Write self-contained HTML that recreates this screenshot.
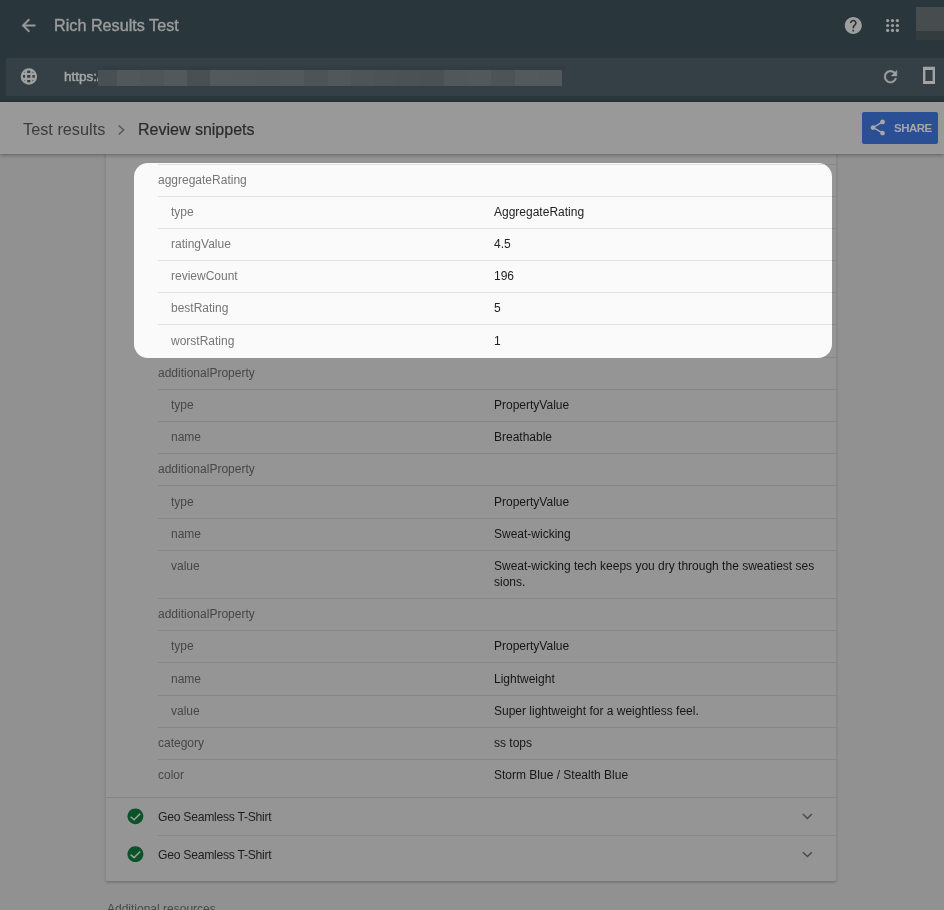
<!DOCTYPE html>
<html><head><meta charset="utf-8">
<style>
*{box-sizing:border-box;margin:0;padding:0}
html,body{width:944px;height:910px;overflow:hidden}
body{position:relative;background:#919191;font-family:"Liberation Sans",sans-serif;}
.a{position:absolute}
.t{position:absolute;white-space:nowrap;line-height:16px;will-change:transform}
#hdr{left:0;top:0;width:944px;height:102px;background:#29363c}
#url{left:6px;top:58px;width:938px;height:38px;background:#344045}
#crumb{left:0;top:102px;width:944px;height:52px;background:#999999;box-shadow:0 1px 4px rgba(0,0,0,.35)}
#card{left:105px;top:140px;width:732px;height:741px;background:#959595;border-left:1px solid #888888;border-right:1px solid #888888;border-radius:0 0 2px 2px;box-shadow:0 2px 3px -1px rgba(0,0,0,.3)}
.ln{position:absolute;height:1px;background:#878787}
.lbl{font-size:12px;color:#474747}
.val{font-size:12px;color:#161616}
#hl{left:134px;top:163px;width:698px;height:195px;background:#fafafa;border-radius:14px;overflow:hidden}
#hl .ln{background:#e2e2e2}
#hl .lbl{color:#767676}
#hl .val{color:#222222}
</style></head><body>
<div id="card" class="a"></div>
<div class="ln" style="left:158px;top:164px;width:678px"></div>
<div class="ln" style="left:158px;top:196px;width:678px"></div>
<div class="ln" style="left:158px;top:228px;width:678px"></div>
<div class="ln" style="left:158px;top:260px;width:678px"></div>
<div class="ln" style="left:158px;top:292px;width:678px"></div>
<div class="ln" style="left:158px;top:324px;width:678px"></div>
<div class="ln" style="left:158px;top:357px;width:678px"></div>
<div class="ln" style="left:158px;top:389px;width:678px"></div>
<div class="ln" style="left:158px;top:421px;width:678px"></div>
<div class="ln" style="left:158px;top:453px;width:678px"></div>
<div class="ln" style="left:158px;top:485px;width:678px"></div>
<div class="ln" style="left:158px;top:518px;width:678px"></div>
<div class="ln" style="left:158px;top:550px;width:678px"></div>
<div class="ln" style="left:158px;top:598px;width:678px"></div>
<div class="ln" style="left:158px;top:630px;width:678px"></div>
<div class="ln" style="left:158px;top:662px;width:678px"></div>
<div class="ln" style="left:158px;top:695px;width:678px"></div>
<div class="ln" style="left:158px;top:727px;width:678px"></div>
<div class="ln" style="left:158px;top:759px;width:678px"></div>
<div class="t lbl" style="left:158px;top:364.64px">additionalProperty</div>
<div class="t lbl" style="left:171px;top:396.64px">type</div>
<div class="t val" style="left:494px;top:396.64px">PropertyValue</div>
<div class="t lbl" style="left:171px;top:428.64px">name</div>
<div class="t val" style="left:494px;top:428.64px">Breathable</div>
<div class="t lbl" style="left:158px;top:460.64px">additionalProperty</div>
<div class="t lbl" style="left:171px;top:493.64px">type</div>
<div class="t val" style="left:494px;top:493.64px">PropertyValue</div>
<div class="t lbl" style="left:171px;top:525.64px">name</div>
<div class="t val" style="left:494px;top:525.64px">Sweat-wicking</div>
<div class="t lbl" style="left:171px;top:557.64px">value</div>
<div class="t val" style="left:494px;top:557.64px">Sweat-wicking tech keeps you dry through the sweatiest ses<br>sions.</div>
<div class="t lbl" style="left:158px;top:605.64px">additionalProperty</div>
<div class="t lbl" style="left:171px;top:637.64px">type</div>
<div class="t val" style="left:494px;top:637.64px">PropertyValue</div>
<div class="t lbl" style="left:171px;top:670.64px">name</div>
<div class="t val" style="left:494px;top:670.64px">Lightweight</div>
<div class="t lbl" style="left:171px;top:702.64px">value</div>
<div class="t val" style="left:494px;top:702.64px">Super lightweight for a weightless feel.</div>
<div class="t lbl" style="left:158px;top:734.64px">category</div>
<div class="t val" style="left:494px;top:734.64px">ss tops</div>
<div class="t lbl" style="left:158px;top:766.64px">color</div>
<div class="t val" style="left:494px;top:766.64px">Storm Blue / Stealth Blue</div>
<div class="ln" style="left:106px;top:797px;width:731px"></div>
<div class="ln" style="left:158px;top:835px;width:678px"></div>
<div class="t val" style="left:158px;top:808.64px;font-size:12.2px;letter-spacing:-0.28px;color:#1e1e1e">Geo Seamless T-Shirt</div>
<div class="t val" style="left:158px;top:847.34px;font-size:12.2px;letter-spacing:-0.28px;color:#1e1e1e">Geo Seamless T-Shirt</div>
<div class="t" style="left:107px;top:901px;font-size:12px;color:#474747">Additional resources</div>
<div id="hl" class="a">
<div class="ln" style="left:24px;top:1px;width:678px"></div>
<div class="ln" style="left:24px;top:33px;width:678px"></div>
<div class="ln" style="left:24px;top:65px;width:678px"></div>
<div class="ln" style="left:24px;top:97px;width:678px"></div>
<div class="ln" style="left:24px;top:129px;width:678px"></div>
<div class="ln" style="left:24px;top:161px;width:678px"></div>
<div class="t lbl" style="left:24px;top:8.64px">aggregateRating</div>
<div class="t lbl" style="left:37px;top:40.64px">type</div>
<div class="t val" style="left:360px;top:40.64px">AggregateRating</div>
<div class="t lbl" style="left:37px;top:72.64px">ratingValue</div>
<div class="t val" style="left:360px;top:72.64px">4.5</div>
<div class="t lbl" style="left:37px;top:104.64px">reviewCount</div>
<div class="t val" style="left:360px;top:104.64px">196</div>
<div class="t lbl" style="left:37px;top:136.64px">bestRating</div>
<div class="t val" style="left:360px;top:136.64px">5</div>
<div class="t lbl" style="left:37px;top:169.64px">worstRating</div>
<div class="t val" style="left:360px;top:169.64px">1</div>
</div>

<div id="hdr" class="a"></div>
<div class="t" style="left:54px;top:16px;font-size:16.2px;color:#9c9c9c;line-height:18px;-webkit-text-stroke:0.4px #9c9c9c">Rich Results Test</div>
<div class="a" style="left:916px;top:7px;width:28px;height:23.5px;background:#474c4e"></div>
<div class="a" style="left:916px;top:30.5px;width:28px;height:9.5px;background:#343c3e"></div>
<div id="url" class="a"></div>
<div class="t" style="left:64px;top:68.7px;font-size:13.5px;color:#a6a6a6;-webkit-text-stroke:0.5px #a6a6a6">https:/</div>
<div class="a" style="left:98px;top:66px;width:468px;height:4px;background:#323c41"></div>
<div class="a" style="left:98px;top:70px;width:464px;height:16px;background:linear-gradient(90deg,#485053 0.0px,#485053 18.6px,#50585b 18.6px,#50585b 42.0px,#4f5659 42.0px,#4f5659 65.6px,#52595c 65.6px,#52595c 89.0px,#485053 89.0px,#485053 112.5px,#525a5d 112.5px,#525a5d 135.0px,#51595c 135.0px,#51595c 159.0px,#50585b 159.0px,#50585b 183.0px,#51595c 183.0px,#51595c 206.0px,#4c5457 206.0px,#4c5457 230.0px,#50585b 230.0px,#50585b 253.0px,#4d5558 253.0px,#4d5558 276.0px,#4b5356 276.0px,#4b5356 299.0px,#4a5255 299.0px,#4a5255 323.0px,#495154 323.0px,#495154 346.0px,#50585b 346.0px,#50585b 370.0px,#51595c 370.0px,#51595c 393.0px,#4c5457 393.0px,#4c5457 417.0px,#525a5d 417.0px,#525a5d 440.0px,#51595c 440.0px,#51595c 464.0px)"></div>

<div id="crumb" class="a"></div>
<div class="t" style="left:23px;top:120px;font-size:16.3px;color:#3c3c3c;line-height:18px">Test results</div>
<div class="t" style="left:137.5px;top:121px;font-size:16px;color:#2b2b2b;line-height:18px;-webkit-text-stroke:0.2px #2b2b2b">Review snippets</div>
<div class="a" style="left:862px;top:112px;width:76px;height:32px;background:#2a4f94;border-radius:2px"></div>
<div class="t" style="left:894.3px;top:120px;font-size:11.5px;color:#a6a6a6;font-weight:bold;letter-spacing:-0.5px">SHARE</div>
<svg class="a" style="left:0;top:0" width="944" height="910" viewBox="0 0 944 910">
<defs><clipPath id="gc"><circle cx="28.9" cy="76.5" r="7.5"/></clipPath></defs>
<g transform="translate(18.600 15.500) scale(0.8333)"><path fill="#9a9a9a" stroke="#9a9a9a" stroke-width="0.5" d="M20 11H7.83l5.59-5.59L12 4l-8 8 8 8 1.41-1.41L7.83 13H20v-2z"/></g>
<g transform="translate(843.100 15.400) scale(0.8500)"><path fill="#9e9e9e" d="M12 2C6.48 2 2 6.48 2 12s4.48 10 10 10 10-4.48 10-10S17.52 2 12 2zm1 17h-2v-2h2v2zm2.07-7.75l-.9.92C13.45 12.9 13 13.5 13 15h-2v-.5c0-1.1.45-2.1 1.17-2.83l1.24-1.26c.37-.36.59-.86.59-1.41 0-1.1-.9-2-2-2s-2 .9-2 2H8c0-2.21 1.79-4 4-4s4 1.79 4 4c0 .88-.36 1.68-.93 2.25z"/></g>
<g fill="#9e9e9e"><circle cx="887.65" cy="20.6" r="1.6"/><circle cx="892.5" cy="20.6" r="1.6"/><circle cx="897.4" cy="20.6" r="1.6"/><circle cx="887.65" cy="25.5" r="1.6"/><circle cx="892.5" cy="25.5" r="1.6"/><circle cx="897.4" cy="25.5" r="1.6"/><circle cx="887.65" cy="30.4" r="1.6"/><circle cx="892.5" cy="30.4" r="1.6"/><circle cx="897.4" cy="30.4" r="1.6"/></g>
<circle cx="28.9" cy="76.5" r="7.1" fill="none" stroke="#a0a0a0" stroke-width="2.2"/>
<g clip-path="url(#gc)" stroke="#a0a0a0" stroke-width="2.1">
<line x1="26.1" y1="66" x2="26.1" y2="88"/><line x1="31.4" y1="66" x2="31.4" y2="88"/>
<line x1="18" y1="73.95" x2="40" y2="73.95"/><line x1="18" y1="78.9" x2="40" y2="78.9"/></g>
<g transform="translate(881.000 67.200) scale(0.7917)"><path fill="#a0a0a0" stroke="#a0a0a0" stroke-width="0.6" d="M17.65 6.35C16.2 4.9 14.21 4 12 4c-4.42 0-7.99 3.58-7.99 8s3.57 8 7.99 8c3.73 0 6.84-2.55 7.73-6h-2.08c-.82 2.33-3.04 4-5.65 4-3.31 0-6-2.69-6-6s2.69-6 6-6c1.66 0 3.14.69 4.22 1.78L13 11h7V4l-2.35 2.35z"/></g>
<path fill="#a3a3a3" fill-rule="evenodd" d="M923 66.8H935V84H923Z M925.4 70.1V80.9H932.6V70.1Z"/>
<path d="M118.8 125.4 L123.6 129.9 L118.8 134.4" fill="none" stroke="#555" stroke-width="1.4"/>
<g transform="translate(868.300 118.000) scale(0.7917)"><path fill="#a8a8a8" d="M18 16.08c-.76 0-1.44.3-1.96.77L8.91 12.7c.05-.23.09-.46.09-.7s-.04-.47-.09-.7l7.05-4.11c.54.5 1.25.81 2.04.81 1.66 0 3-1.34 3-3s-1.34-3-3-3-3 1.34-3 3c0 .24.04.47.09.7L8.04 9.81C7.5 9.31 6.79 9 6 9c-1.66 0-3 1.34-3 3s1.34 3 3 3c.79 0 1.5-.31 2.04-.81l7.12 4.16c-.05.21-.08.43-.08.65 0 1.61 1.31 2.92 2.92 2.92 1.61 0 2.92-1.31 2.92-2.92s-1.31-2.92-2.92-2.92z"/></g>
<g transform="translate(125.900 806.800) scale(0.7917)"><path fill="#0b5229" d="M12 2C6.48 2 2 6.48 2 12s4.48 10 10 10 10-4.48 10-10S17.52 2 12 2z"/><path fill="none" stroke="#9c9c9c" stroke-width="1.9" d="M6 12.6 L10.3 16.3 L18.1 8.6"/></g>
<g transform="translate(125.900 844.700) scale(0.7917)"><path fill="#0b5229" d="M12 2C6.48 2 2 6.48 2 12s4.48 10 10 10 10-4.48 10-10S17.52 2 12 2z"/><path fill="none" stroke="#9c9c9c" stroke-width="1.9" d="M6 12.6 L10.3 16.3 L18.1 8.6"/></g>
<g transform="translate(797.200 806.500) scale(1.0000)"><path fill="none" stroke="#484848" stroke-width="1.45" d="M5.7 7.6 L10.2 11.9 L14.7 7.6"/></g>
<g transform="translate(797.200 844.600) scale(1.0000)"><path fill="none" stroke="#484848" stroke-width="1.45" d="M5.7 7.6 L10.2 11.9 L14.7 7.6"/></g>
</svg>
</body></html>
